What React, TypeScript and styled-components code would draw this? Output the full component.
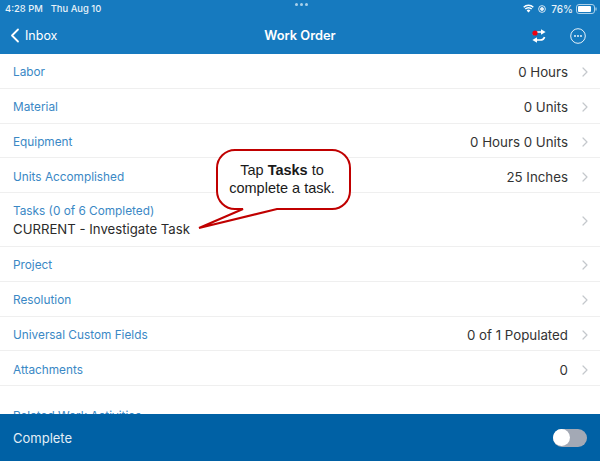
import React from 'react';
import styled, { createGlobalStyle } from 'styled-components';

const GlobalStyle = createGlobalStyle`
  html, body { margin: 0; padding: 0; background: #fff; }
  body { font-family: Inter, "Noto Sans", sans-serif; }
`;

const Page = styled.div`
  position: relative;
  width: 600px;
  height: 461px;
  overflow: hidden;
  display: flex;
  flex-direction: column;
  background: #fff;
`;

const Header = styled.header`
  flex: 0 0 54px;
  background: #167abf;
  color: #fff;
  display: flex;
  flex-direction: column;
`;

const StatusBar = styled.div`
  height: 17px;
  padding: 0 3px 0 5px;
  display: grid;
  grid-template-columns: 1fr auto 1fr;
  align-items: center;
  font-size: 9.4px;
  font-weight: 500;
  color: #e8f2f9;
`;

const StatusLeft = styled.div`
  display: flex;
  gap: 8px;
`;

const StatusRight = styled.div`
  display: flex;
  justify-content: flex-end;
  align-items: center;
  gap: 3px;
  font-size: 10px;
`;

const Dots = styled.div`
  display: flex;
  gap: 2px;
  margin-top: -9px;
`;

const Dot = styled.span`
  width: 3px;
  height: 3px;
  border-radius: 50%;
  background: #a9d0ea;
`;

const NavBar = styled.div`
  flex: 1;
  display: grid;
  grid-template-columns: 1fr auto 1fr;
  align-items: center;
  padding: 0 14px;
`;

const BackLink = styled.div`
  display: flex;
  align-items: center;
  gap: 5px;
  margin-left: -4px;
  font-size: 12.5px;
`;

const Title = styled.div`
  font-size: 12.8px;
  font-weight: 600;
`;

const NavActions = styled.div`
  display: flex;
  justify-content: flex-end;
  align-items: center;
  gap: 24px;
`;

const List = styled.main`
  flex: 1;
  min-height: 0;
  overflow: hidden;
`;

const Row = styled.div<{ $tall?: boolean; $spaced?: boolean }>`
  box-sizing: border-box;
  height: ${p => (p.$tall ? '54px' : '34.75px')};
  padding: ${p => (p.$tall ? '2px' : '3px')} 12px 0 13px;
  margin-top: ${p => (p.$spaced ? '12px' : '0')};
  display: flex;
  align-items: center;
  justify-content: space-between;
  border-bottom: 1px solid #efefef;
`;

const RowText = styled.div`
  display: flex;
  flex-direction: column;
  gap: 3px;
`;

const Label = styled.span`
  color: #3a88c5;
  font-size: 11.8px;
`;

const Current = styled.span`
  color: #2b2b2b;
  font-size: 13.2px;
`;

const RowEnd = styled.div`
  display: flex;
  align-items: center;
  gap: 14px;
  color: #333;
  font-size: 13.3px;
`;

const Footer = styled.footer`
  flex: 0 0 47px;
  background: #0061a5;
  color: #e3eef6;
  display: flex;
  align-items: center;
  justify-content: space-between;
  padding: 0 13px;
  font-size: 13px;
`;

const Toggle = styled.div`
  width: 34px;
  height: 18px;
  border-radius: 9px;
  background: #a3a9b5;
  display: flex;
  align-items: center;
`;

const Knob = styled.span`
  width: 17px;
  height: 17px;
  border-radius: 50%;
  background: #fff;
`;

const Callout = styled.div`
  position: absolute;
  left: 198px;
  top: 148px;
  width: 156px;
  height: 88px;
`;

const CalloutText = styled.div`
  position: absolute;
  left: 17px;
  top: 13px;
  width: 134px;
  text-align: center;
  font-family: "Liberation Sans", Arial, sans-serif;
  font-size: 14.5px;
  line-height: 18px;
  color: #1a1a1a;
  b { font-weight: 700; }
`;

const LocationIcon = styled.svg`
  margin: 0 2px 0 1px;
`;

const Chevron = () => (
  <svg width="6" height="10" viewBox="0 0 6 10" fill="none" stroke="#c4c8cc" strokeWidth="1.2" strokeLinecap="round" strokeLinejoin="round">
    <path d="M1 1l4 4-4 4" />
  </svg>
);

const rowsTop = [
  { label: 'Labor', value: '0 Hours' },
  { label: 'Material', value: '0 Units' },
  { label: 'Equipment', value: '0 Hours 0 Units' },
  { label: 'Units Accomplished', value: '25 Inches' },
];

const rowsBottom = [
  { label: 'Project', value: '' },
  { label: 'Resolution', value: '' },
  { label: 'Universal Custom Fields', value: '0 of 1 Populated' },
  { label: 'Attachments', value: '0' },
];

const ListRow = ({ label, value }: { label: string; value: string }) => (
  <Row>
    <Label>{label}</Label>
    <RowEnd>
      {value}
      <Chevron />
    </RowEnd>
  </Row>
);

export default function App() {
  return (
    <Page>
      <GlobalStyle />
      <Header>
        <StatusBar>
          <StatusLeft>
            <span>4:28 PM</span>
            <span>Thu Aug 10</span>
          </StatusLeft>
          <Dots>
            <Dot />
            <Dot />
            <Dot />
          </Dots>
          <StatusRight>
            <svg width="11" height="9" viewBox="0 0 11 9" fill="none" stroke="#fff" strokeWidth="1.5">
              <path d="M.7 3.2a6.8 6.8 0 0 1 9.6 0M2.3 5a4.5 4.5 0 0 1 6.4 0" />
              <path d="M3.6 6.4a2.7 2.7 0 0 1 3.8 0L5.5 8.6Z" fill="#fff" stroke="none" />
            </svg>
            <LocationIcon width="8" height="8" viewBox="0 0 9 9" fill="none" stroke="#e8f2f9" strokeWidth="1">
              <circle cx="4.5" cy="4.5" r="3.8" />
              <circle cx="4.5" cy="4.5" r="1.7" fill="#e8f2f9" />
            </LocationIcon>
            <span>76%</span>
            <svg width="21" height="10" viewBox="0 0 21 10">
              <rect x=".5" y=".5" width="18" height="9" rx="2.5" fill="none" stroke="#a9d0ea" />
              <rect x="2" y="2" width="13" height="6" rx="1" fill="#fff" />
              <path d="M20 3.5v3" stroke="#a9d0ea" strokeWidth="1.2" />
            </svg>
          </StatusRight>
        </StatusBar>
        <NavBar>
          <BackLink>
            <svg width="10" height="15" viewBox="0 0 10 15" fill="none" stroke="#fff" strokeWidth="1.8" strokeLinecap="round" strokeLinejoin="round">
              <path d="M8 1.5L2 7.5l6 6" />
            </svg>
            Inbox
          </BackLink>
          <Title>Work Order</Title>
          <NavActions>
            <svg width="14" height="14" viewBox="0 0 14 14">
              <path d="M1.5 6C2 3.8 3.8 3 6 3H10" fill="none" stroke="#fff" strokeWidth="1.7" />
              <path d="M9 .3 13.6 3 9 5.7Z" fill="#fff" />
              <path d="M12.5 8C12 10.2 10.2 11 8 11H4" fill="none" stroke="#fff" strokeWidth="1.7" />
              <path d="M5 8.3.4 11 5 13.7Z" fill="#fff" />
              <circle cx="3" cy="4" r="2.6" fill="#f0000f" />
            </svg>
            <svg width="16" height="16" viewBox="0 0 16 16" fill="none" stroke="#e8f2f9" strokeWidth="1">
              <circle cx="8" cy="8" r="7.3" />
              <circle cx="5" cy="8" r=".9" fill="#fff" stroke="none" />
              <circle cx="8" cy="8" r=".9" fill="#fff" stroke="none" />
              <circle cx="11" cy="8" r=".9" fill="#fff" stroke="none" />
            </svg>
          </NavActions>
        </NavBar>
      </Header>
      <List>
        {rowsTop.map(r => (
          <ListRow key={r.label} {...r} />
        ))}
        <Row $tall>
          <RowText>
            <Label>Tasks (0 of 6 Completed)</Label>
            <Current>CURRENT - Investigate Task</Current>
          </RowText>
          <RowEnd>
            <Chevron />
          </RowEnd>
        </Row>
        {rowsBottom.map(r => (
          <ListRow key={r.label} {...r} />
        ))}
        <Row $spaced>
          <Label>Related Work Activities</Label>
        </Row>
      </List>
      <Footer>
        Complete
        <Toggle>
          <Knob />
        </Toggle>
      </Footer>
      <Callout>
        <svg width="156" height="88" viewBox="0 0 156 88">
          <path
            d="M37 2H134a18 18 0 0 1 18 18V43a18 18 0 0 1-18 18H79L1 80 45 61H37a18 18 0 0 1-18-18V20A18 18 0 0 1 37 2Z"
            fill="#fff"
            stroke="#c00000"
            strokeWidth="2"
            strokeLinejoin="miter"
          />
        </svg>
        <CalloutText>
          Tap <b>Tasks</b> to
          <br />
          complete a task.
        </CalloutText>
      </Callout>
    </Page>
  );
}
